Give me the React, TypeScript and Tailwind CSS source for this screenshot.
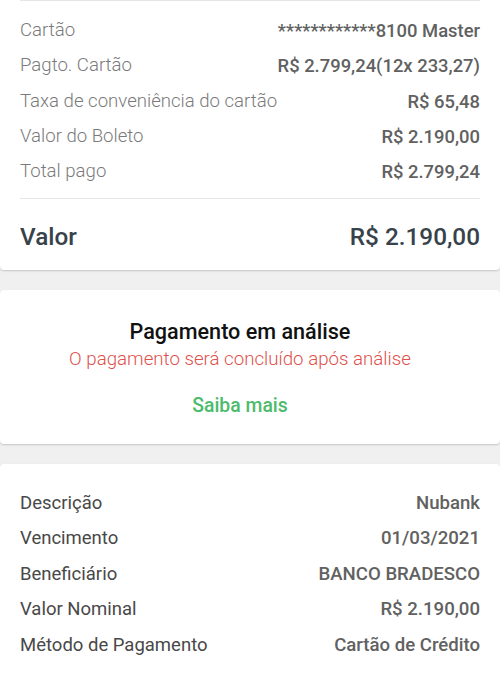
const font = { fontFamily: "Roboto, 'Liberation Sans', sans-serif" };

const pagamento = [
  ["Cartão", "************8100 Master"],
  ["Pagto. Cartão", "R$ 2.799,24(12x 233,27)"],
  ["Taxa de conveniência do cartão", "R$ 65,48"],
  ["Valor do Boleto", "R$ 2.190,00"],
  ["Total pago", "R$ 2.799,24"],
];

const detalhes = [
  ["Descrição", "Nubank"],
  ["Vencimento", "01/03/2021"],
  ["Beneficiário", "BANCO BRADESCO"],
  ["Valor Nominal", "R$ 2.190,00"],
  ["Método de Pagamento", "Cartão de Crédito"],
];

export default function App() {
  return (
    <main
      className="min-h-[675px] w-[500px] overflow-hidden bg-[#f0f0f0] text-neutral-900"
      style={font}
    >
      {/* resumo do pagamento */}
      <section className="rounded-b-[4px] bg-white px-5 shadow-[0_1px_2px_rgba(0,0,0,0.18)]">
        <div className="border-t border-[#e6e6e6] pt-[12px]">
          {pagamento.map(([label, value]) => (
            <div
              key={label}
              className="flex h-[35.4px] items-center justify-between"
            >
              <span className="text-[18.6px] font-light text-[#7a7a7a]">{label}</span>
              <span className="text-[18.4px] font-medium text-[#616161]">{value}</span>
            </div>
          ))}
        </div>
        <div className="mt-[8px] flex h-[72px] items-center justify-between border-t border-[#e6e6e6] pt-[5px] text-[24.3px] font-medium text-[#37424a]">
          <span>Valor</span>
          <span>R$ 2.190,00</span>
        </div>
      </section>

      {/* status */}
      <section className="mt-5 flex h-[154px] flex-col items-center rounded-[4px] bg-white pt-[28px] pr-5 shadow-[0_1px_2px_rgba(0,0,0,0.18)]">
        <h2 className="text-[21.6px] font-medium leading-[28px] text-[#111]">
          Pagamento em análise
        </h2>
        <p className="text-[18.7px] font-light leading-[26px] text-[#e0504b]">
          O pagamento será concluído após análise
        </p>
        <a className="mt-[21px] text-[19.4px] font-medium leading-[26px] text-[#4cbb6c]">
          Saiba mais
        </a>
      </section>

      {/* detalhes do boleto */}
      <section className="mt-5 rounded-t-[4px] bg-white px-5 pt-[22px] pb-4 shadow-[0_1px_2px_rgba(0,0,0,0.18)]">
        {detalhes.map(([label, value]) => (
          <div
            key={label}
            className="flex h-[35.5px] items-center justify-between"
          >
            <span className="text-[18.5px] text-[#484848]">{label}</span>
            <span className="text-[18.6px] font-medium text-[#616161]">{value}</span>
          </div>
        ))}
      </section>
    </main>
  );
}
